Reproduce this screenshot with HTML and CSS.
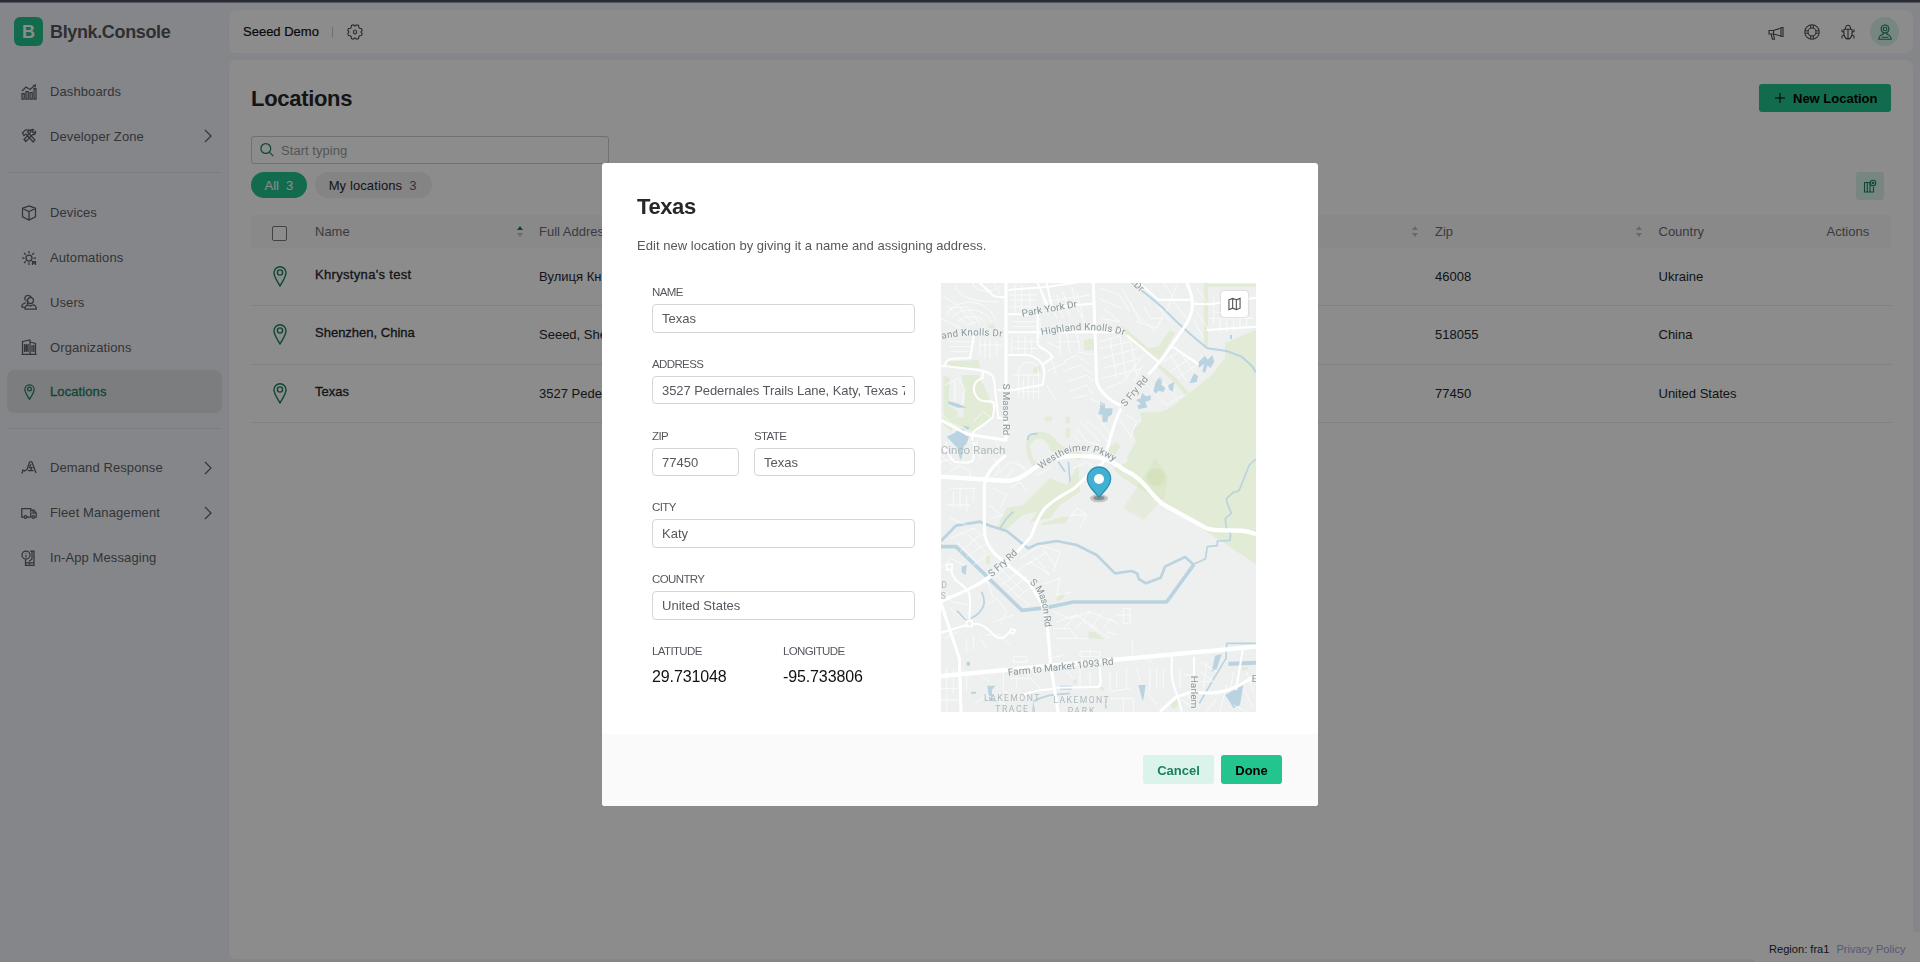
FILE: index.html
```html
<!DOCTYPE html>
<html lang="en">
<head>
<meta charset="utf-8">
<title>Blynk.Console</title>
<link rel="stylesheet" href="styles.css">
</head>
<body>
<div class="strip"></div>
<div class="app">
  <aside class="sidebar">
    <div class="brand"><span class="brand-mark">B</span><span class="brand-name">Blynk.Console</span></div>
    <nav class="nav">
      <a class="item"><svg class="ico" viewBox="0 0 16 16"><path d="M1 9.500h2.200v5.500H1zM5 7.500h2.200v7.500H5zM9 8.500h2.200v6.500H9zM13 4.500h2v10.500h-2zM1 7l4-4 4 2.500 4-3.500M12 1.500l2.500-.5-.5 2.500"/></svg><span>Dashboards</span></a>
      <a class="item"><svg class="ico" viewBox="0 0 16 16"><path d="M1.500 5l3-3.200 4 .2-2 2 7.500 8-1.800 2L5 6 3 7.500zM14.500 3.500l-2 1.500-1.500-1.500 1.500-2c-2-.5-3.500 1-3 2.800L3 11.500 4.800 13.500 11.500 6.600c2 .3 3.500-1 3-3.100z"/></svg><span>Developer Zone</span><svg class="chev" viewBox="0 0 8 14"><path d="M1 1l6 6-6 6"/></svg></a>
      <hr>
      <a class="item"><svg class="ico" viewBox="0 0 16 16"><path d="M8 .8l6.500 2.500v8.500L8 15l-6.500-3.200V3.300zM1.500 3.500L8 6.500l6.500-3M8 6.500V15"/></svg><span>Devices</span></a>
      <a class="item"><svg class="ico" viewBox="0 0 16 16"><circle cx="8" cy="8" r="3"/><path d="M8 1v2.500M1 8h2.500M12.500 8H15M3 3l1.800 1.800M13 3l-1.800 1.800M3 13l1.800-1.800M8 12.500V15M11.500 15v-3.500h3V15M11.500 13.200h3"/></svg><span>Automations</span></a>
      <a class="item"><svg class="ico" viewBox="0 0 16 16"><circle cx="9.500" cy="6.500" r="3"/><path d="M4 15.200c-.3-2.500 1.500-4.200 3.500-4.200l2 1 2-1c2.500-.3 4 2 3.800 4.200zM4.500 6.500C3 4 4.500 1 7.500 1.500c1.500 0 2.500.8 2.800 2M5 8.500l-3 1.500c-1.500 1-1 3-1 3.200h2.500M5.500 6l1.500 2.500-1 2"/></svg><span>Users</span></a>
      <a class="item"><svg class="ico" viewBox="0 0 16 16"><path d="M1.500 15.300V2.500L9 1v14M9 3l5.500 1.500v10.800M.5 15.300h15M3.500 5v8M5.300 5v8M7 5v8M3 7h4.500M3 9h4.500M3 11h4.500M11 6v7M12.800 6v7"/></svg><span>Organizations</span></a>
      <a class="item active"><svg class="ico" viewBox="0 0 16 16"><path d="M8.500 15.300C6.500 12 3.900 8.500 3.900 5.400a4.600 4.600 0 0 1 9.200 0c0 3.100-2.600 6.600-4.600 9.900z"/><circle cx="8.500" cy="5" r="1.900"/></svg><span>Locations</span></a>
      <hr>
      <a class="item"><svg class="ico" viewBox="0 0 16 16"><path d="M1 13.500l1-3.500 1.500 1L6 9.500l2-6C8.500 1 11 1 11.500 3.500l3.500 9.500M7 10.500h5.500M10 4L8.500 7.500H11L9.500 10.500"/></svg><span>Demand Response</span><svg class="chev" viewBox="0 0 8 14"><path d="M1 1l6 6-6 6"/></svg></a>
      <a class="item"><svg class="ico" viewBox="0 0 16 16"><path d="M3 12H.8V3.500h9V12H6M9.800 5H13l2.200 3.200V12h-1M10.500 12h-.7M12 5.500V8h3"/><circle cx="4.500" cy="12" r="1.300"/><circle cx="12.300" cy="12" r="1.300"/></svg><span>Fleet Management</span><svg class="chev" viewBox="0 0 8 14"><path d="M1 1l6 6-6 6"/></svg></a>
      <a class="item"><svg class="ico" viewBox="0 0 16 16"><circle cx="5" cy="5" r="4"/><path d="M5 3v.8M5 5v2.500M9 1h4v14.300H4.500V9.500M4.500 12.800H13M11 1v8l-3 2.500M8.500 13.500v1"/></svg><span>In-App Messaging</span></a>
    </nav>
  </aside>
  <main class="main">
    <header class="topbar">
      <span class="org">Seeed Demo</span><i class="bar"></i>
      <svg class="ico gear" viewBox="0 0 16 16"><path d="M6.300.8L8 2 9.700.8l1.900.7.200 2 .7.700 2 .2.700 1.900L14 8l1.200 1.700-.7 1.900-2 .2-.7.700-.2 2-1.900.7L8 14l-1.700 1.200-1.900-.7-.2-2-.7-.7-2-.2-.7-1.900L2 8 .8 6.300l.7-1.900 2-.2.7-.7.2-2z"/><ellipse cx="8" cy="8" rx="1.600" ry="2"/></svg>
      <div class="tools">
        <svg class="ico" viewBox="0 0 16 16"><path d="M1 6.500h4.500L13 4v8L5.500 10H1zM13 3.500h2v9h-2M5.500 6.500v3.500M3 10l1.500 5.200h2L5.500 10.500"/></svg>
        <svg class="ico" viewBox="0 0 16 16"><circle cx="8" cy="8" r="7.200"/><circle cx="8" cy="8" r="4"/><path d="M6.700 1v3M9.300 1v3M6.700 12v3M9.300 12v3M1 6.700h3M1 9.300h3M12 6.700h3M12 9.300h3"/></svg>
        <svg class="ico" viewBox="0 0 16 16"><path d="M8 5v10M4 5.200h8M4 5.200c-.7 5 .5 9.800 4 9.800s4.700-4.800 4-9.800M5.500 5C5.500 0 10.500 0 10.500 5M4 8.500L2 7.500V5.500M12 8.500l2-1V5.500M4 11l-2 1v2.500M12 11l2 1v2.500"/></svg>
        <span class="avatar"><svg class="ico" viewBox="0 0 16 16"><path d="M8 .8l3 1.300 1 2.900-1 2.800-3 1.500-3-1.500L4 5l1-2.900z"/><circle cx="8" cy="5" r="1.800"/><path d="M6 9v1.500c-3 .5-4 2-4.200 4.700h12.400c-.2-2.700-1.200-4.200-4.200-4.700V9M4.500 13.200h7"/></svg></span>
      </div>
    </header>
    <section class="page">
      <div class="head"><h1>Locations</h1><button class="btn add"><svg viewBox="0 0 10 10"><path d="M5 0v10M0 5h10"/></svg><span>New Location</span></button></div>
      <div class="search"><svg viewBox="0 0 14 14"><circle cx="5.800" cy="5.500" r="4.900"/><path d="M9.300 9.200l4 4"/></svg><span>Start typing</span></div>
      <div class="tabs"><span class="tab on">All <b>3</b></span><span class="tab mine">My locations <b>3</b></span>
        <span class="cols"><svg class="ico" viewBox="0 0 16 16"><path d="M2.500 14v-9.500h2.800v9.500zM5.300 14v-9.500h2.700v9.500zM8 14h3.500V9"/><circle cx="11" cy="5" r="2.800"/><circle cx="11" cy="5" r=".8"/></svg></span></div>
      <div class="table">
        <div class="row th"><span class="check"></span><span>Name</span><span class="sort asc"></span><span>Full Address</span><span class="sort"></span><span>Zip</span><span class="sort"></span><span>Country</span><span>Actions</span></div>
        <div class="row"><svg class="pin" viewBox="0 0 14 21"><path d="M7 20C4.500 15.500 1 11 1 6.800a6 6 0 0 1 12 0C13 11 9.500 15.500 7 20z"/><circle cx="7" cy="6.500" r="2.600"/></svg><span class="name long">Khrystyna's test</span><i></i><span>Вулиця Кн</span><i></i><span>46008</span><i></i><span>Ukraine</span></div>
        <div class="row"><svg class="pin" viewBox="0 0 14 21"><path d="M7 20C4.500 15.500 1 11 1 6.800a6 6 0 0 1 12 0C13 11 9.500 15.500 7 20z"/><circle cx="7" cy="6.500" r="2.600"/></svg><span class="name">Shenzhen, China</span><i></i><span>Seeed, She</span><i></i><span>518055</span><i></i><span>China</span></div>
        <div class="row"><svg class="pin" viewBox="0 0 14 21"><path d="M7 20C4.500 15.500 1 11 1 6.800a6 6 0 0 1 12 0C13 11 9.500 15.500 7 20z"/><circle cx="7" cy="6.500" r="2.600"/></svg><span class="name">Texas</span><i></i><span>3527 Pede</span><i></i><span>77450</span><i></i><span>United States</span></div>
      </div>
    </section>
    <footer class="region"><span>Region: fra1</span><a>Privacy Policy</a></footer>
  </main>
</div>

<div class="overlay">
  <div class="modal">
    <div class="modal-body">
      <h2>Texas</h2>
      <p>Edit new location by giving it a name and assigning address.</p>
      <div class="split">
        <div class="form">
          <div class="field"><label>NAME</label><div class="input">Texas</div></div>
          <div class="field"><label>ADDRESS</label><div class="input"><span class="clip">3527 Pedernales Trails Lane, Katy, Texas 77450</span></div></div>
          <div class="pair">
            <div class="field zip"><label>ZIP</label><div class="input">77450</div></div>
            <div class="field state"><label>STATE</label><div class="input">Texas</div></div>
          </div>
          <div class="field"><label>CITY</label><div class="input">Katy</div></div>
          <div class="field"><label>COUNTRY</label><div class="input">United States</div></div>
          <div class="coords"><div><label>LATITUDE</label><strong>29.731048</strong></div><div><label>LONGITUDE</label><strong>-95.733806</strong></div></div>
        </div>
        <div class="map">
          <svg class="canvas" viewBox="33 24 945 1287">
            <rect class="land" x="33" y="24" width="945" height="1287"/>
            <!-- parks -->
            <g class="park">
              <path d="M978 165L940 180 885 205 885 250 845 300 790 345 720 400 690 412H630L636 440 608 465 618 500 592 545V560L550 582 575 605 860 790 978 868z"/>
              <path d="M50 260l95-5 5 25-100 0zM40 300l20 10-5 80 30 20-20 60-25-20zM95 300l50 0 30 60 20 60-60 50-55-10-30-30 50-5 5-60zM575 150l80 70 30-5 35-50 15 10-45 80-20-15-80-60zM685 265l55 45 38 45-12 5-45-50-40-35zM822 24h12v190h-12zM834 26h144v9H834zM462 195l30-5v36h-30zM310 278l22-8v20l-22 5z"/>
              <path d="M290 500c10-40 70-40 95 5 30 20 50 30 75 25l-10 25-60-10-30-20c-10-40-50-45-60-10l10 40 30 20-25 5c-20-20-30-50-25-80zM330 640l30-30 50 20 35-60 5 80-60 40-30 40-60 10 20-30-40 10-60 50-20-10 30-60 50-10zM335 745l60-20 30 0-20 20-70 5zM407 460h12v28h-12zM407 425h12v20h-12zM345 425h20v14h-20zM535 520l25-20 10 15-20 30h-20zM175 148h17v12h-17z"/>
              <path d="M380 970l15-15 10-5-5 20-20 10zM475 1070l20 0 27 22-45-2zM168 843h12v25h-12zM720 1290l20-20 5 22-15 10zM935 1175h18v10h-18zM508 1235l15 2-5 15zM430 1215l10-3v14l-10 3z"/>
            </g>
            <path class="park-dark" d="M676 550L714 605 704 665 640 735 580 700z" opacity=".3"/>
            <circle class="park-dark" cx="678" cy="606" r="27" opacity=".6"/>
            <!-- water -->
            <g class="water">
              <path d="M510 380l15 8 0 12 23 0-2 18-12 8-2 16-15-2 0-20-12-2 5-20zM618 375l14-5 4-16 12 10 14-3v14l-16 6 6 16-26 6-4-12 12-4zM676 325l12-20 10 10-4 14 12 10-6 12-14-4-10 10-6-8zM715 330l18-10-5 30-12-5zM778 325l14-30 12 8-4 18zM805 262l20-20 8 12 14-14 6 20-12 20-8-10-8 24-8-6 6-22-16 12z"/>
              <path d="M50 485l25-12 12-12h15l5 20 10 2-5 20-10 10-8 40h-4l-8-35zM55 378l30 8 25 12-25 0-30-10zM98 452l22 4-8 10zM900 180h6v12h-6zM95 875l15-5-3 30-12-8zM110 1160h10v12h-10zM172 1232h24l-10 12v25l20 10h-28zM845 1190l10-48 20-5-15 45zM885 1260l55-30-10 60-20 10-10-18zM895 1160l83-3v12l-83 4zM625 1230l22 0-8 50-6-20zM123 1250h15v6h-15zM390 1232h35v12h-35zM310 1280l6 30h-10zM525 1270l6 30h-6z"/>
            </g>
            <g class="river">
              <path class="r6" d="M605 24L660 66 700 100 745 145 790 185 832 220 890 228 935 245 965 272 978 292"/>
              <path class="r8" d="M33 798L78 752 150 740 180 752 230 768 270 800 295 820 320 808 380 798 440 810 500 840 555 895 605 888 622 896 626 912 648 925 692 908 705 875 765 846 790 868"/>
              <path class="r5" d="M790 868L826 852 832 815 862 812 862 798 900 796 902 778 888 755 886 730 904 715 890 680 890 670 910 652 925 648 930 640 958 570 978 552"/>
              <path class="r10" d="M33 815H78L276 1006 350 998 430 981H710L792 868"/>
              <path class="r5" d="M155 950c15 35 5 50-10 65s-20 10-30 20-20-20-35-27M293 495c0-25 25-15 30-20M385 560l20 30M415 560l5 60M210 760l20-30 20-20M808 1285l35-60 45-75 2-45h88M310 1280c30-20 60-20 110-25"/>
            </g>
            <!-- local streets -->
            <g class="minor">
              <path d="M33 60l50 30 50 60M50 90l60 60 30-10M60 100l50-5 40 50M33 130l60 30M50 120c20-50 120-60 150 20M65 130c20-30 90-40 120 10M85 140c20-20 60-20 80 0M130 24c0 30 60 30 80 10M190 24l20 30M75 30c10 40 60 50 130 50M55 200h80M60 215h70M65 230h50M150 190v50M165 195v55M180 190v60M200 195v50M145 210h70M45 330l40-20 20 30-10 50M75 320v60M130 440l30-30 25 20M33 415l30 30 50 20M50 500l-10 50 30 20M110 500l30 10 20 40M140 495l10 60M60 590l30-20 30 20v30M33 560l40-10M180 520l30 20M190 490l20 30"/>
              <path d="M240 60h80M240 75h80M240 95h85M255 30v90M275 30v90M300 50v70M335 60l20 60M360 70l20 60M380 60l20 70M400 50l20 80M440 50l20 80M340 80l140-20M350 105l130-20M425 35l15 60 30 60M245 140h75M250 155h70M245 190v50M265 180v60M285 180v60M305 190v50M330 130v60M250 200h70M250 220h75M265 370v-70c0-50 60-50 60-10v80M280 370v-60M295 370v-70M310 370v-60M250 300h80M265 350h65M350 200l40 20M360 240l20 60M350 290l60-30M350 330l30 50"/>
              <path d="M390 180v60M410 175l10 60M440 175l10 50M380 200h70M400 260l40-20 40 30M400 290l50-20 40 30M410 320l60-20 20 20M420 350l50-20 20 30M430 370l40-10M440 230l50 10M510 40l60 20 30 50M505 70l70 30M520 100l50 40M510 130l60 10M575 40l40 70 60 60M600 80l30 60M620 140l60 20 20-40M640 90l20 40 40 0M510 200l70-20M510 220l90-20M515 250l110-30M520 280l110-30M515 310l120-30M530 340l50-20M540 190l20 120M570 185l20 130M600 190l20 110M640 240l-60 80M610 320l30-50"/>
              <path d="M700 24l30 40M740 30l-30 80M680 90l50 60M730 80l40 50M800 40l30 40M800 110l40 60M790 130l30 60M850 60v90M870 130v40M890 130v40M910 130v40M930 120v40M950 120v40M850 110l120 20M840 130h130M700 260l50-30 50 30M720 290l60-40M740 310l60-40M720 240l50 80M750 230l40 60M680 300l60 70M650 330l60 60 50-30M590 420l30 20-20 50M560 420l40 60M470 440l40 30 30 40M440 460l30 40 40 10M430 480l20 20M500 420l40 60M480 370l40 20M450 440l60 60"/>
              <path d="M200 600l40-40 50 20M220 620l30-40M180 620l30-40-20-30M260 560l30 30M240 640l30-20 20 30M60 640h80M70 650v50M90 640v60M110 660v50M130 640v40M50 690h70M60 730l50 20M190 640l40 20-20 40M175 690l40 30M180 730l40-10M320 600l40-20M430 580l40-20 20 20M410 740l30-40 30 20-20 40M420 720h50"/>
              <path d="M60 790l70-30 40 30M90 830l60-50M110 845l60-40M130 870l40-30M80 800l60 60M110 775l60 60M270 850l60-40 60 20-20 60M290 870l60-40M260 890l40-30 60 40M310 840l50 60M340 820l40 60M330 930l60-20-10 50 50-10M200 900l60 60 40 30M190 910l50-40M215 930l50-40M235 950l60-50M260 970l50-40M200 870l80 80"/>
              <path d="M33 880l30-30 40 20M45 950l20 30 50 10M60 1000l60 50M45 1090l40-20M140 930l30-20 20 60M170 990l30-20 30 40-20 40M190 1040l60-20M170 1080h40l30 30M150 1090l20 30M110 1090v40M130 1085v40M370 1010l50 20 60-20 70 30M380 1040l60-20 60 40M400 1060l40-40M440 1060l40-50M480 1060l40-50M520 1060l20-30 30 20M530 1070l30 10M460 1040l80 50M580 1000h20v45h-20zM560 1020h45M370 1060h50l20 30M380 1090h90M450 1130h60v14h-60zM480 1120v20M250 1145h40v16h-40zM607 1095v50M360 1150l40-10"/>
              <path d="M50 1180v130M70 1180v80M33 1240h50M33 1275h50M110 1200v50M150 1200l30 20M130 1290l40-30 60 30M220 1190v60l60 20M240 1210h60M260 1190v50M290 1200l40 40M400 1180l30 30M450 1180v60M480 1190v40M400 1265l80 10M440 1265v45M540 1190v60l60-10M560 1190v50M590 1180v60M620 1180l10 40M660 1180v70M680 1180v60M700 1180v60M540 1270h70v40M580 1270v40M650 1250l30 40M750 1180v60M760 1200h30M810 1160l50 30M810 1190l40 30M810 1220h40M830 1160l-10 80M860 1270l-30 40M890 1230l-20 80M910 1190l-10 60M950 1190l20 60M940 1240l30 60M750 1270l40 30M770 1260l40 40M910 1290l40 20M650 1150l20 15"/>
            </g>
            <!-- collectors -->
            <g class="road">
              <path d="M150 24L190 62Q200 67 228 67M235 45l120-10 135-20M323 24l35 80M350 24l15 70M233 118h90v90c10 15 40 20 45 40l-30 20M348 98l140-12M233 172h350M590 180l98 83M233 240l60 0c40 10 50 30 50 60l-5 30-50 8-40 8h-45M45 270c5-20 10-20 75-20l12-70M33 272l110 12c50 10 50 20 52 60l10 85 20 0M158 290v20c-40 10-30 60 0 68 40 0 40 0 30 50l-40 30c-20 10-25 20-20 40M33 520c30 0 20 40 50 42 50 0 50 10 50-60M635 30l50 44h100M790 86l50 2 138-20M725 213l80 55M830 165l148-10M62 880c10 60 60 40 58 100l-2 70M33 975l90-35 60-40M33 1073l85-25c40-10 60 20 80 38 20 8 25 0 45-18M280 1260c60-25 80-10 100-22l120-2c20 0 8-30 10-60M725 1145v50c0 40 20 60 30 115M792 1145v110M938 1125l-20 120"/>
            </g>
            <!-- arterials -->
            <g class="major">
              <path d="M228 24v475M228 540Q165 590 163 632V765Q165 815 210 850L298 924 335 985 352 1050 362 1170 384 1311M490 24L500 320Q515 365 573 392M770 24c30 60 20 100-20 150-20 30-50 80-95 125M573 400c-30 60-35 110-55 165-50 40-60 50-85 75-90 50-100 60-130 145-40 50-110 110-140 130M183 905Q150 930 33 980M33 435l80 43 115 18M33 985L88 1150 93 1311M690 1310l50-45 50-15c60 10 110 5 188-50"/>
              <path class="wide" d="M33 605L233 618C303 613 313 543 433 543 503 540 543 553 583 585 643 610 663 665 703 690L830 760C870 775 930 755 978 778M33 1203L978 1115"/>
            </g>
            <g class="knot"><path d="M50 868h16v16H50zM110 1038h16v16h-16zM244 1062l12 4-6 10-12-5z"/></g>
            <defs>
              <path id="westheimer" d="M334 584C400 530 460 500 556 562"/>
              <path id="mason" d="M298 924C335 950 340 1000 345 1062"/>
              <path id="knolls" d="M335 180C410 167 500 152 590 184"/>
              <path id="knolls2" d="M28 194C90 180 130 178 226 186"/>
            </defs>
            <g class="label">
              <text transform="translate(277 125) rotate(-10)" textLength="168" lengthAdjust="spacingAndGlyphs">Park York Dr</text>
              <text textLength="250"><textPath href="#knolls">Highland Knolls Dr</textPath></text>
              <text textLength="190"><textPath href="#knolls2">land Knolls Dr</textPath></text>
              <text transform="translate(219 326) rotate(90)" textLength="155" lengthAdjust="spacingAndGlyphs">S Mason Rd</text>
              <text transform="translate(586 396) rotate(-50)" textLength="108" lengthAdjust="spacingAndGlyphs">S Fry Rd</text>
              <text textLength="240"><textPath href="#westheimer">Westheimer Pkwy</textPath></text>
              <text transform="translate(185 907) rotate(-42)" textLength="106" lengthAdjust="spacingAndGlyphs">S Fry Rd</text>
              <text textLength="145"><textPath href="#mason">S Mason Rd</textPath></text>
              <text transform="translate(235 1202) rotate(-6)" textLength="318" lengthAdjust="spacingAndGlyphs">Farm to Market 1093 Rd</text>
              <text transform="translate(783 1202) rotate(90)" textLength="98" lengthAdjust="spacingAndGlyphs">Harlem</text>
              <text transform="translate(610 32) rotate(42)">Dr</text>
              <text x="965" y="1220">E</text>
            </g>
            <g class="place">
              <text x="32" y="538" textLength="194" lengthAdjust="spacingAndGlyphs">Cinco Ranch</text>
              <text x="34" y="938" class="small">D</text><text x="32" y="973" class="small">S</text>
              <text x="162" y="1277" class="small" textLength="166">LAKEMONT</text><text x="196" y="1311" class="small" textLength="98">TRACE</text>
              <text x="370" y="1284" class="small" textLength="166">LAKEMONT</text><text x="413" y="1317" class="small" textLength="80">PARK</text>
            </g>
            <ellipse class="shade s1" cx="507" cy="670" rx="27" ry="12"/><ellipse class="shade" cx="507" cy="669" rx="17" ry="7"/>
            <path class="marker" d="M507 669c-5-15-35-30-35-58a35 35 0 0 1 70 0c0 28-30 43-35 58z"/><circle cx="507" cy="612" r="15" fill="#fff"/>
          </svg>
          <span class="map-btn"><svg viewBox="0 0 14 14"><path d="M1 2.500L5 1l4 1.500L13 1v10.500L9 13l-4-1.500L1 13zM5 1v10.500M9 2.500V13"/></svg></span>
        </div>
      </div>
    </div>
    <div class="modal-foot"><button class="btn cancel">Cancel</button><button class="btn done">Done</button></div>
  </div>
</div>
</body>
</html>
```

FILE: styles.css
```css
* { box-sizing: border-box; }
body { margin: 0; height: 962px; overflow: hidden; background: #f2f5f9; color: #26272b; font: 13px/16px "Liberation Sans", Arial, sans-serif; }
h1, h2, p { margin: 0; }
.strip { height: 3px; background: #2b2b34; border-bottom: 1px solid #565764; }
.app { display: flex; height: 959px; }
.sidebar { width: 229px; padding: 14px 7px 0; }
.brand { display: flex; align-items: center; gap: 7px; height: 29px; padding-left: 7px; }
.brand-mark { width: 29px; height: 29px; border-radius: 6px; background: #24c48e; color: #fff; font-weight: bold; font-size: 18px; line-height: 30px; text-align: center; }
.brand-name { font-weight: bold; font-size: 18px; letter-spacing: -.36px; color: #55565c; }
.nav { padding-top: 24px; }
.item { display: flex; align-items: center; height: 43px; margin-bottom: 1.8px; padding: 0 10px 0 14px; border-radius: 7px; color: #5e6066; letter-spacing: .1px; }
.item span { margin: 1px 0 0 13px; flex: 1; }
.nav hr { margin: 14.500px 0 18px; border: 0; height: 1px; background: #dfe2e6; }
.nav .active + hr { margin: 14.500px 0 17.500px; }
.item.active { background: #e1e4e8; color: #1b805f; }
.item.active span { -webkit-text-stroke: .3px; }
.ico { width: 16px; height: 16px; fill: none; stroke: currentColor; stroke-width: 1.250; flex: none; }
.chev { width: 8px; height: 14px; fill: none; stroke: currentColor; stroke-width: 1.200; }
.main { width: 1684px; padding-top: 7px; }
.topbar { display: flex; align-items: center; height: 43px; padding: 0 14px; border-radius: 7px; background: #fff; color: #4b4c52; }
.topbar .ico, .cols .ico { stroke-width: 1.100; }
.org { color: #111; width: 77px; margin-top: 1px; -webkit-text-stroke: .2px; white-space: nowrap; }
.bar { width: 1px; height: 11px; margin: 1px 14px 0 12px; background: #c9ccd2; }
.tools { display: flex; align-items: center; gap: 20px; margin-left: auto; }
.avatar { display: flex; align-items: center; justify-content: center; width: 29px; height: 29px; margin-left: -6px; border-radius: 50%; background: #daf4eb; color: #1b805f; }
.page { height: 899px; margin-top: 7px; padding: 24px 22px 0; border-radius: 7px; background: #fff; }
.head { display: flex; justify-content: space-between; align-items: center; height: 28px; }
h1 { margin-top: 2px; font-size: 22px; line-height: 28px; letter-spacing: -.3px; }
.btn { border: 0; border-radius: 3px; height: 28px; font: bold 13px/29px "Liberation Sans", Arial, sans-serif; padding: 0; text-align: center; }
.add { display: flex; align-items: center; gap: 8px; width: 132px; padding-left: 16px; background: #24c48e; color: #000; }
.add svg { width: 10px; height: 10px; stroke: #000; stroke-width: 1; }
.search { display: flex; align-items: center; width: 358px; height: 28px; margin-top: 24px; padding-left: 8px; border: 1px solid #cbccd0; border-radius: 3px; color: #9a9ba0; gap: 7px; letter-spacing: .05px; }
.search span { margin-top: 2px; }
.search svg { width: 14px; height: 14px; fill: none; stroke: #1b805f; stroke-width: 1.200; }
.tabs { display: flex; gap: 8px; height: 28px; margin-top: 8px; }
.tab { display: flex; gap: 7px; height: 26px; line-height: 27px; padding: 0 13.500px; border-radius: 13px; background: #f0f0f1; }
.tab b { font-weight: normal; color: #5e6066; }
.tab.mine { width: 117px; padding-left: 14px; letter-spacing: .1px; }
.tab.on { background: #24c48e; color: #fff; }
.tab.on b { color: #fff; }
.cols { display: flex; align-items: center; justify-content: center; width: 28px; height: 28px; margin: 0 7px 0 auto; border-radius: 3px; background: #daf4eb; color: #1b805f; }
.table { margin-top: 15px; }
.row { display: grid; grid-template-columns: 64px 202px 22px 872.500px 23.500px 201px 22.500px 168px auto; align-items: center; height: 58.250px; border-bottom: 1px solid #e9eaec; white-space: nowrap; }
.row > span:not(.name) { padding-top: 1px; }
.row.th { height: 33px; background: #fafafa; border: 0; color: #6b6c72; border-radius: 3px 3px 0 0; }
.row.th > span { padding-top: 0; }
.row .name { -webkit-text-stroke: .3px; padding-bottom: 3px; }
.row .name.long { letter-spacing: .32px; }
.check { width: 15px; height: 15px; margin: 3px 0 0 21px; border: 1px solid #77787d; border-radius: 2px; background: #fff; }
.pin { width: 14px; height: 21px; margin-left: 22px; fill: none; stroke: #1b805f; stroke-width: 1.400; }
.sort { display: flex; flex-direction: column; gap: 3px; }
.sort::before, .sort::after { content: ""; width: 0; border: 3.500px solid transparent; }
.sort::before { border-bottom: 4px solid #bfc0c4; border-top: 0; }
.sort::after { border-top: 4px solid #bfc0c4; border-bottom: 0; }
.sort.asc::before { border-bottom-color: #1b805f; }
.region { position: fixed; right: 0; bottom: 0; width: 166px; height: 30px; display: flex; gap: 7px; padding: 9px 0 0 15px; background: #fff; font-size: 11.100px; line-height: 16px; white-space: nowrap; }
.region a { color: #9ba3dc; }
.overlay { position: fixed; inset: 3px 0 0 0; background: rgba(0, 0, 0, .45); padding-top: 160px; }
.modal { width: 716px; height: 643px; margin: 0 auto; border-radius: 3px; background: #fff; overflow: hidden; color: #57585e; }
.modal-body { height: 571px; padding: 30px 36px 0 35px; }
h2 { height: 28px; font-size: 22px; line-height: 28px; letter-spacing: -.4px; color: #26272b; }
.modal p { margin-top: 17px; letter-spacing: .03px; white-space: nowrap; }
.split { display: flex; margin-top: 29px; }
.form { width: 263px; margin: 2px 26px 0 15px; }
.field { height: 71.800px; }
label { display: block; height: 19px; font-size: 11.500px; line-height: 15px; letter-spacing: -.62px; color: #57585e; }
.input { height: 28.500px; padding: 0 9px; border: 1px solid #d6d6d8; border-radius: 4px; line-height: 28px; letter-spacing: .02px; }
.clip { display: block; overflow: hidden; white-space: nowrap; letter-spacing: -.07px; }
.pair { display: flex; gap: 15px; }
.zip { width: 87px; }
.state { width: 161px; }
.coords { display: flex; }
.coords div { width: 131px; }
.coords strong { display: block; margin-top: 1px; font-weight: normal; font-size: 16px; line-height: 26px; letter-spacing: -.12px; color: #101114; }
.map { position: relative; width: 315px; height: 429px; }
.canvas { display: block; width: 315px; height: 429px; }
.land { fill: #eef0f0; }
.park { fill: #e1ebd6; }
.park-dark { fill: #cfe0b4; }
.water { fill: #bad3e0; }
.river, .minor, .road, .major { fill: none; stroke-linejoin: round; }
.river { stroke: #bad3e0; }
.r5 { stroke-width: 5; }
.r6 { stroke-width: 6; }
.r8 { stroke-width: 8; }
.r10 { stroke-width: 11; }
.minor { stroke: #fff; stroke-width: 2.500; opacity: .75; }
.road { stroke: #fff; stroke-width: 6; }
.major { stroke: #fff; stroke-width: 9; }
.wide { stroke-width: 13; }
.knot { fill: #eef0e8; stroke: #fff; stroke-width: 5; }
.label, .place { font-family: "Roboto", sans-serif; font-size: 29px; fill: #8a9699; }
.label { stroke: #f1f3f3; stroke-width: 5; paint-order: stroke; }
.place { fill: #b0b9bb; font-size: 32px; }
.place .small { font-size: 26px; }
.shade { fill: #777; opacity: .7; }
.s1 { fill: #999; opacity: .5; }
.marker { fill: #42b0d0; stroke: #2b91b3; stroke-width: 4; }
.map-btn { position: absolute; top: 8px; right: 8px; display: flex; align-items: center; justify-content: center; width: 27px; height: 26px; border-radius: 3px; background: #fff; box-shadow: 0 0 2px rgba(0, 0, 0, .25); }
.map-btn svg { width: 13px; height: 14px; fill: none; stroke: #55565c; stroke-width: 1.200; }
.modal-foot { display: flex; gap: 7px; justify-content: flex-end; height: 72px; padding: 21px 36px 0; background: #fafafa; }
.modal-foot .btn { height: 29px; line-height: 31px; }
.cancel { width: 71px; background: #daf4eb; color: #1b805f; }
.done { width: 61px; background: #24c48e; color: #000; }
```
